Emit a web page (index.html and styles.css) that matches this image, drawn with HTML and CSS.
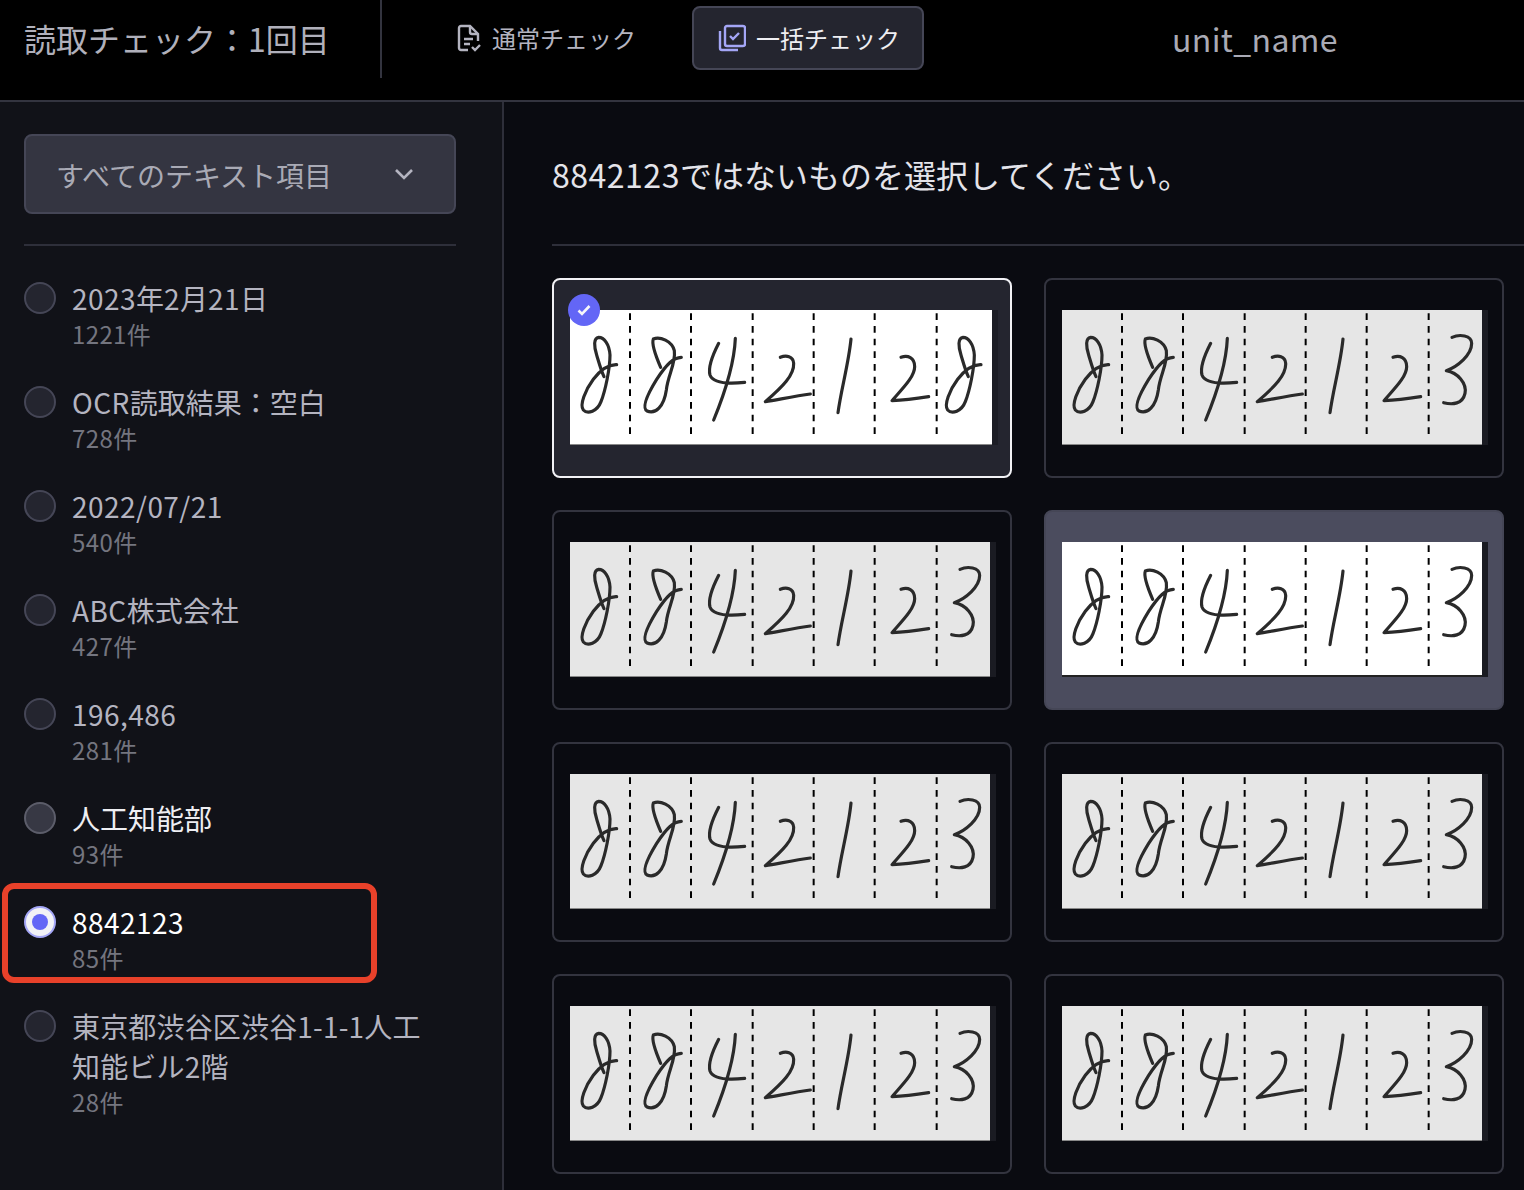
FILE: index.html
```html
<!DOCTYPE html>
<html lang="ja">
<head>
<meta charset="utf-8">
<title>読取チェック</title>
<link rel="stylesheet" href="styles.css">
</head>
<body>
<svg class="sprites" aria-hidden="true">
  <defs>
    <g id="base">
      <path class="dash" d="M180 10V385M363 10V385M548 10V385M731 10V385M914 10V385M1100 10V385"/>
      <g transform="translate(-2 0)">
        <path id="eight" class="ink" d="M142 164C118 163 95 178 72 208C48 240 30 285 42 300C55 314 84 304 95 275C108 242 122 175 122 135C120 102 104 82 88 82C72 84 74 110 82 135C88 155 94 178 104 200"/>
        <path class="ink" d="M336 142C312 143 292 162 262 208C236 250 216 292 233 303C258 314 284 290 291 240C296 195 320 160 315 122C308 94 272 78 252 87C246 102 258 135 274 172"/>
        <path class="ink" d="M448 100C430 135 415 170 422 195C432 222 480 222 526 217M498 85C495 160 470 240 433 330"/>
        <path class="ink" d="M633 142C650 135 672 138 673 160C675 195 640 230 588 275C630 268 680 258 723 252"/>
        <path class="ink" d="M845 87C838 160 815 240 806 308"/>
        <path class="ink" d="M995 142C1015 135 1036 142 1036 170C1036 200 1000 235 968 272C1010 270 1045 265 1078 260"/>
      </g>
    </g>
    <g id="num3">
      <use href="#base"/>
      <path class="ink" d="M1173 82C1195 72 1232 75 1232 100C1232 135 1190 170 1156 182C1190 188 1218 220 1212 250C1205 282 1175 285 1148 278" transform="translate(-3 0)"/>
    </g>
    <g id="num8">
      <use href="#base"/>
      <use href="#eight" x="1091"/>
    </g>
  </defs>
</svg>
<div class="app">
  <header class="topbar">
    <h1 class="title">読取チェック：1回目</h1>
    <nav class="tabs">
      <a class="tab">
        <svg class="tab-icon" viewBox="0 0 28 28"><path d="M12 26H5a2 2 0 0 1-2-2V4a2 2 0 0 1 2-2h9l8 8v7"/><path d="M14 2v6a2 2 0 0 0 2 2h6"/><path d="M8 15h9M8 20h6"/><path d="M16 23l3 3 5-5"/></svg>
        <span class="tab-label">通常チェック</span>
      </a>
      <a class="tab tab-active">
        <svg class="tab-icon" viewBox="0 0 28 28"><rect x="7" y="2" width="20" height="20" rx="2"/><path d="M2 7v17a2 2 0 0 0 2 2h16"/><path d="M12 12l3 3 6-6"/></svg>
        <span class="tab-label">一括チェック</span>
      </a>
    </nav>
    <div class="unit">unit_name</div>
  </header>
  <div class="body">
    <aside class="sidebar">
      <div class="select">
        <span class="select-label">すべてのテキスト項目</span>
        <svg class="chevron" viewBox="0 0 20 12"><path d="M2 2l8 8 8-8"/></svg>
      </div>
      <ul class="list">
        <li class="item"><span class="radio"></span><div class="text"><div class="name"><span class="lat">2023</span>年<span class="lat">2</span>月<span class="lat">21</span>日</div><div class="count"><span class="lat">1221</span>件</div></div></li>
        <li class="item"><span class="radio"></span><div class="text"><div class="name"><span class="lat">OCR</span>読取結果：空白</div><div class="count"><span class="lat">728</span>件</div></div></li>
        <li class="item"><span class="radio"></span><div class="text"><div class="name"><span class="lat">2022/07/21</span></div><div class="count"><span class="lat">540</span>件</div></div></li>
        <li class="item"><span class="radio"></span><div class="text"><div class="name"><span class="lat">ABC</span>株式会社</div><div class="count"><span class="lat">427</span>件</div></div></li>
        <li class="item"><span class="radio"></span><div class="text"><div class="name"><span class="lat">196,486</span></div><div class="count"><span class="lat">281</span>件</div></div></li>
        <li class="item item-hover"><span class="radio"></span><div class="text"><div class="name">人工知能部</div><div class="count"><span class="lat">93</span>件</div></div></li>
        <li class="item item-selected"><span class="radio"></span><div class="text"><div class="name"><span class="lat">8842123</span></div><div class="count"><span class="lat">85</span>件</div></div><span class="annotation"></span></li>
        <li class="item"><span class="radio"></span><div class="text"><div class="name name-long">東京都渋谷区渋谷1-1-1人工知能ビル2階</div><div class="count"><span class="lat">28</span>件</div></div></li>
      </ul>
    </aside>
    <main class="main">
      <h2 class="question"><span class="lat">8842123</span>ではないものを選択してください。</h2>
      <div class="grid">
        <div class="card card-checked">
          <span class="badge"><svg viewBox="0 0 16 16"><path d="M2.5 8.5l3.500 3.500 7.500-8"/></svg></span>
          <div class="paper paper-white"><svg viewBox="0 0 1266 405"><use href="#num8"/></svg></div>
        </div>
        <div class="card"><div class="paper"><svg viewBox="0 0 1260 405"><use href="#num3"/></svg></div></div>
        <div class="card"><div class="paper"><svg viewBox="0 0 1260 405"><use href="#num3"/></svg></div></div>
        <div class="card card-hover"><div class="paper paper-white"><svg viewBox="0 0 1260 405"><use href="#num3"/></svg></div></div>
        <div class="card"><div class="paper"><svg viewBox="0 0 1260 405"><use href="#num3"/></svg></div></div>
        <div class="card"><div class="paper"><svg viewBox="0 0 1260 405"><use href="#num3"/></svg></div></div>
        <div class="card"><div class="paper"><svg viewBox="0 0 1260 405"><use href="#num3"/></svg></div></div>
        <div class="card"><div class="paper"><svg viewBox="0 0 1260 405"><use href="#num3"/></svg></div></div>
      </div>
    </main>
  </div>
</div>
</body>
</html>
```

FILE: styles.css
```css
* { box-sizing: border-box; }
html, body { margin: 0; height: 100%; overflow: hidden; background: #0a0b11; }
body { font-family: "Noto Sans CJK JP", "Noto Sans", sans-serif; color: #b4b4c0; }
.sprites { position: absolute; width: 0; height: 0; }
.app { display: flex; flex-direction: column; height: 100vh; }
.lat { letter-spacing: 0.016em; }

.topbar { display: flex; align-items: flex-start; height: 102px; flex: none; background: #000; border-bottom: 2px solid #33343f; }
.title { margin: 0; width: 382px; height: 78px; padding: 18px 0 0 24px; font-size: 32px; line-height: 40px; font-weight: 400; color: #b0b0bb; border-right: 2px solid #33343f; }
.tabs { display: flex; gap: 30px; margin: 6px 0 0 48px; }
.tab { display: flex; align-items: center; gap: 8px; height: 64px; padding: 0 24px; border: 2px solid transparent; border-radius: 8px; font-size: 24px; color: #b4b4c0; }
.tab-label { margin-top: -2px; }
.tab-active { gap: 10px; padding-right: 22px; background: #24252f; border-color: #454656; color: #eeeef2; }
.tab-icon { width: 28px; height: 28px; fill: none; stroke: currentColor; stroke-width: 2.4; }
.tab-active .tab-icon { stroke: #a4a6f6; }
.unit { margin: 18px 186px 0 auto; font-size: 32px; line-height: 40px; letter-spacing: 0.012em; color: #a9aab5; }

.body { display: flex; flex: 1; min-height: 0; }
.sidebar { width: 504px; flex: none; padding: 32px 46px 0 24px; background: #111218; border-right: 2px solid #2e2f3a; }
.select { display: flex; align-items: center; justify-content: space-between; height: 80px; padding: 0 40px 0 32px; background: #343541; border: 2px solid #454656; border-radius: 8px; font-size: 28px; color: #a9aab5; }
.select-label { margin: 2px 0 0 -2px; }
.chevron { width: 20px; height: 12px; fill: none; stroke: #b4b4c0; stroke-width: 2.6; }
.list { list-style: none; margin: 30px 0 0; padding: 34px 0 0; border-top: 2px solid #2e2f3a; }
.item { position: relative; display: flex; gap: 16px; margin-bottom: 32px; }
.text { max-width: 360px; margin-top: -2px; margin-bottom: 2px; }
.radio { flex: none; position: relative; width: 32px; height: 32px; margin-top: 2px; border-radius: 50%; background: #24252f; border: 2px solid #454656; }
.name { font-size: 28px; line-height: 40px; color: #b4b4c0; }
.name-long { letter-spacing: 0.006em; }
.count { font-size: 24px; line-height: 32px; color: #74757f; }
.item-hover .radio { background: #373844; border-color: #5c5d6a; }
.item-hover .name { color: #eeeef2; }
.item-selected .name { color: #fff; }
.item-selected .radio { background: #f2f2f6; border-color: #a4a6f6; }
.item-selected .radio::after { content: ""; position: absolute; inset: 6px; border-radius: 50%; background: #6366f6; }
.annotation { position: absolute; top: -21px; left: -22px; width: 375px; height: 100px; border: 6px solid #e8412a; border-radius: 12px; }

.main { flex: 1; min-width: 0; padding-left: 48px; }
.question { margin: 0; height: 144px; padding-top: 50px; font-size: 32px; line-height: 44px; font-weight: 400; color: #e4e4ea; border-bottom: 2px solid #2e2f3a; }
.grid { display: grid; grid-template-columns: 460px 460px; grid-auto-rows: 200px; gap: 32px; margin-top: 32px; }
.card { position: relative; padding: 30px 0 0 16px; border: 2px solid #33343f; border-radius: 8px; }
.card-checked { background: #24252f; border-color: #f2f2f6; }
.card-hover { background: #4b4c5e; border-color: #454656; }
.paper { width: 426px; height: 135px; background: #e6e6e6; border-right: 6px solid #1a1b22; box-shadow: inset 0 -1px 0 #888; }
.paper svg { display: block; width: 100%; height: 135px; }
.paper-white { background: #fff; }
.card-hover .paper { box-shadow: inset 0 -2px 0 #222; }
.card-checked .paper { width: 428px; border-right-color: #1c1d25; }
.badge { position: absolute; top: 14px; left: 14px; width: 32px; height: 32px; display: flex; align-items: center; justify-content: center; border-radius: 50%; background: #6366f6; }
.badge svg { width: 16px; height: 16px; fill: none; stroke: #f6f6fa; stroke-width: 2.6; }
.ink { fill: none; stroke: #2a2a2a; stroke-width: 9.5; stroke-linecap: round; stroke-linejoin: round; }
.dash { fill: none; stroke: #000; stroke-width: 6; stroke-dasharray: 20 18; }
```
